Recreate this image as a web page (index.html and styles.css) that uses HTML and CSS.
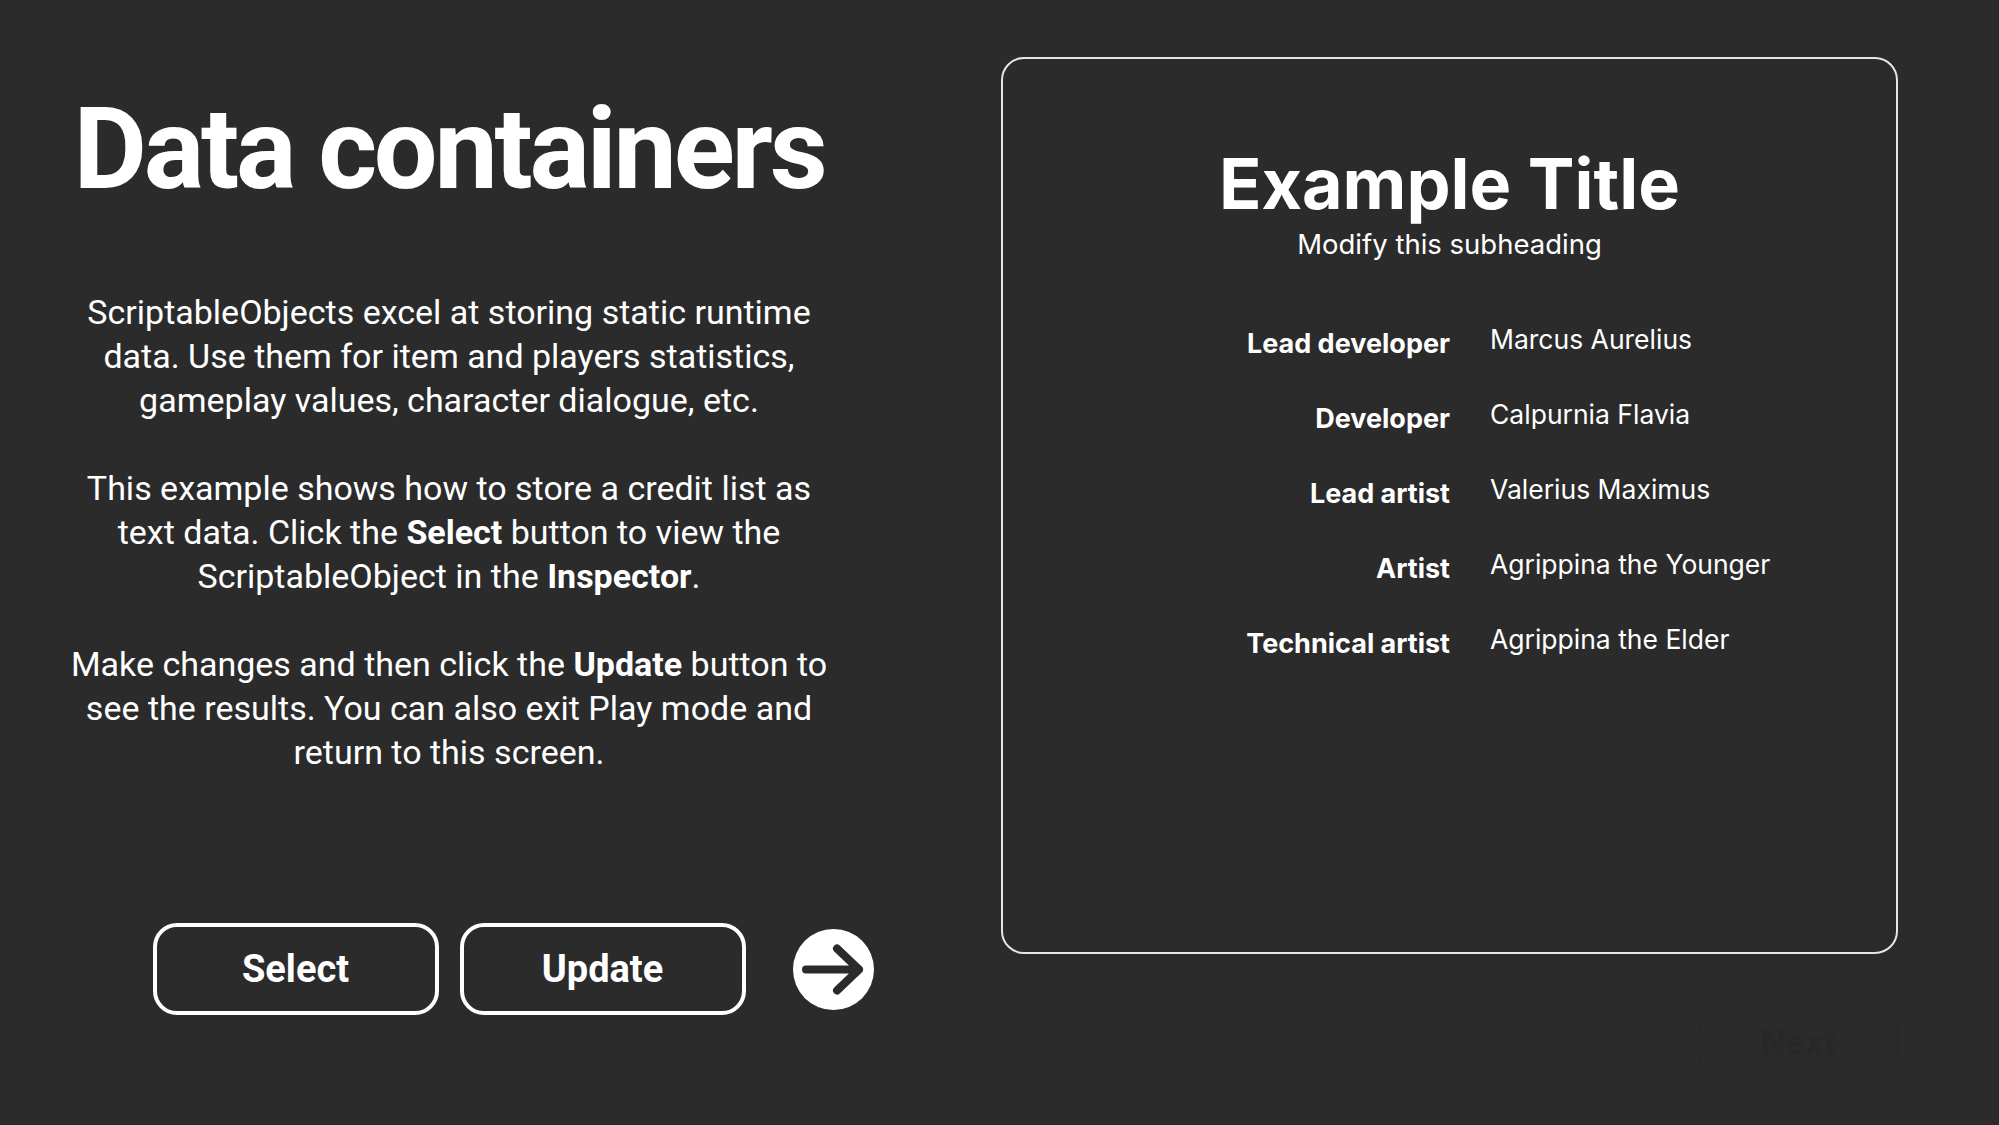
FILE: index.html
```html
<!DOCTYPE html>
<html lang="en">
<head>
<meta charset="utf-8">
<title>Data containers</title>
<link rel="stylesheet" href="styles.css">
</head>
<body>
<main class="screen">
  <section class="intro">
    <h1 class="intro-title">Data containers</h1>
    <div class="intro-text">
      <p>ScriptableObjects excel at storing static runtime<br>data. Use them for item and players statistics,<br>gameplay values, character dialogue, etc.</p>
      <p>This example shows how to store a credit list as<br>text data. Click the <b>Select</b> button to view the<br>ScriptableObject in the <b>Inspector</b>.</p>
      <p>Make changes and then click the <b>Update</b> button to<br>see the results. You can also exit Play mode and<br>return to this screen.</p>
    </div>
    <div class="actions">
      <div class="btn-group">
        <button class="btn">Select</button>
        <button class="btn">Update</button>
      </div>
      <button class="next" aria-label="Next">
        <svg viewBox="0 0 81 81" width="81" height="81">
          <circle cx="40.5" cy="40.5" r="40.5" fill="#ffffff"/>
          <path d="M13 40.5 H66 M44 19.5 L66 40.5 L44 61.5" fill="none" stroke="#2b2b2b" stroke-width="8" stroke-linecap="round" stroke-linejoin="round"/>
        </svg>
      </button>
    </div>
  </section>
  <section class="side">
    <div class="panel">
      <h2 class="panel-title">Example Title</h2>
      <p class="panel-sub">Modify this subheading</p>
      <dl class="credits">
        <dt>Lead developer</dt><dd>Marcus Aurelius</dd>
        <dt>Developer</dt><dd>Calpurnia Flavia</dd>
        <dt>Lead artist</dt><dd>Valerius Maximus</dd>
        <dt>Artist</dt><dd>Agrippina the Younger</dd>
        <dt>Technical artist</dt><dd>Agrippina the Elder</dd>
      </dl>
    </div>
    <div class="ghost">Next</div>
  </section>
</main>
</body>
</html>
```

FILE: styles.css
```css
* { box-sizing: border-box; }
html, body {
  margin: 0;
  padding: 0;
  background: #2b2b2b;
  width: 1999px;
  height: 1125px;
  overflow: hidden;
}
body {
  color: #ffffff;
  font-family: Roboto, "Liberation Sans", sans-serif;
}
.screen {
  display: grid;
  grid-template-columns: 898px 897px;
  column-gap: 103px;
  align-items: start;
}
.intro {
  padding-top: 93px;
  display: flex;
  flex-direction: column;
  align-items: center;
  text-align: center;
}
.intro-title {
  margin: 0;
  font-size: 113px;
  line-height: 114px;
  font-weight: 700;
  letter-spacing: -3.2px;
}
.intro-text {
  margin-top: 83px;
  font-size: 34px;
  line-height: 44px;
  font-weight: 400;
}
.intro-text p { margin: 0 0 44px 0; }
.intro-text p:last-child { margin-bottom: 0; }
.intro-text b { font-weight: 700; }
.actions {
  margin-top: 149px;
  width: 100%;
  display: grid;
  grid-template-columns: 1fr auto 1fr;
  align-items: center;
}
.btn-group {
  grid-column: 2;
  display: flex;
  gap: 21px;
}
.btn {
  width: 286px;
  height: 92px;
  border: 4px solid #ffffff;
  border-radius: 24px;
  background: transparent;
  color: #ffffff;
  font-family: Roboto, "Liberation Sans", sans-serif;
  font-weight: 700;
  font-size: 38px;
  padding: 0;
}
.next {
  grid-column: 3;
  justify-self: start;
  margin-left: 47px;
  width: 81px;
  height: 81px;
  padding: 0;
  border: 0;
  background: transparent;
  display: block;
}
.next svg { display: block; }
.side {
  display: flex;
  flex-direction: column;
}
.panel {
  margin-top: 57px;
  height: 897px;
  border: 2px solid #e6e6e6;
  border-radius: 23px;
  padding-top: 89px;
  font-family: Inter, "Noto Sans", sans-serif;
  text-align: center;
}
.panel-title {
  margin: 0;
  font-size: 70px;
  line-height: 72px;
  font-weight: 700;
}
.panel-sub {
  margin: 8px 0 0 0;
  font-size: 27.5px;
  line-height: 32px;
  font-weight: 400;
}
.credits {
  margin: 46px 0 0 0;
  display: grid;
  grid-template-columns: 447px 1fr;
  column-gap: 40px;
  grid-auto-rows: 75px;
  text-align: left;
}
.credits dt {
  text-align: right;
  font-size: 27px;
  line-height: 75px;
  font-weight: 700;
}
.credits dd {
  margin: 0;
  font-size: 26.5px;
  line-height: 67px;
  font-weight: 400;
}
.ghost {
  align-self: flex-end;
  margin-top: 66px;
  width: 200px;
  height: 46px;
  border: 2px solid #292929;
  border-radius: 8px;
  color: #282828;
  font-family: Roboto, sans-serif;
  font-weight: 700;
  font-size: 36px;
  line-height: 42px;
  text-align: center;
}
```
